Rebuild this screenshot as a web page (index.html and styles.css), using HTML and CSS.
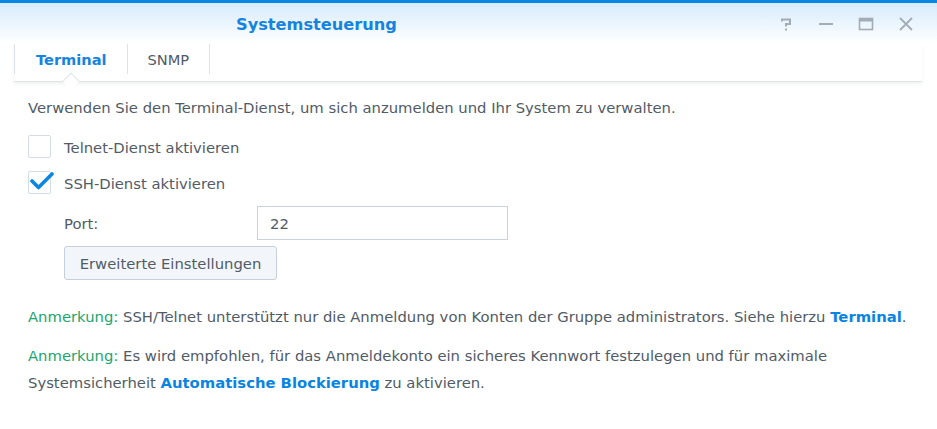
FILE: index.html
```html
<!DOCTYPE html>
<html lang="de">
<head>
    <meta charset="UTF-8">
    <title>Systemsteuerung</title>
    <link rel="stylesheet" href="styles.css">
</head>
<body>
    <div class="window">
        <div class="header">
            <div class="title">Systemsteuerung</div>
            <div class="controls">
                <svg class="ctl" width="16" height="16" viewBox="0 0 16 16"><path d="M4 5.5 V3.5 H12 V8 H8 V10.5" fill="none" stroke="#a3acb5" stroke-width="2"/><rect x="7" y="12.5" width="2" height="2" fill="#a3acb5"/></svg>
                <svg class="ctl" width="16" height="16" viewBox="0 0 16 16"><rect x="1" y="7" width="14" height="2" fill="#a3acb5"/></svg>
                <svg class="ctl" width="16" height="16" viewBox="0 0 16 16"><rect x="1.5" y="2.5" width="13" height="11" fill="none" stroke="#a3acb5" stroke-width="1.6"/><rect x="1.5" y="2.5" width="13" height="3" fill="#a3acb5"/></svg>
                <svg class="ctl" width="16" height="16" viewBox="0 0 16 16"><path d="M2 2 L14 14 M14 2 L2 14" stroke="#a3acb5" stroke-width="1.8"/></svg>
            </div>
        </div>

        <div class="tabs">
            <div class="tab active">Terminal</div>
            <div class="tab">SNMP</div>
        </div>

        <div class="content">
            <p class="intro">Verwenden Sie den Terminal-Dienst, um sich anzumelden und Ihr System zu verwalten.</p>

            <div class="check-row">
                <span class="box"></span>
                <span>Telnet-Dienst aktivieren</span>
            </div>
            <div class="check-row">
                <span class="box">
                    <svg class="tick" width="24" height="20" viewBox="0 0 24 20"><path d="M2 10 L8.5 16.5 L22 3" fill="none" stroke="#0b86e2" stroke-width="3.6" stroke-linecap="round" stroke-linejoin="round"/></svg>
                </span>
                <span>SSH-Dienst aktivieren</span>
            </div>

            <div class="sub">
                <div class="field">
                    <label for="port">Port:</label>
                    <input type="text" id="port" value="22">
                </div>
                <button type="button">Erweiterte Einstellungen</button>
            </div>

            <p class="note"><span class="green">Anmerkung:</span> SSH/Telnet unterstützt nur die Anmeldung von Konten der Gruppe administrators. Siehe hierzu <a href="#">Terminal</a>.</p>
            <p class="note">
                <span class="green">Anmerkung:</span> Es wird empfohlen, für das Anmeldekonto ein sicheres Kennwort festzulegen und für maximale<br>
                Systemsicherheit <a href="#">Automatische Blockierung</a> zu aktivieren.
            </p>
        </div>
    </div>
</body>
</html>
```

FILE: styles.css
```css
* {
    box-sizing: border-box;
}
body {
    margin: 0;
    background: #fff;
    font-family: "DejaVu Sans", Verdana, sans-serif;
    font-size: 14.8px;
    color: #515b66;
}
.header {
    height: 44px;
    border-top: 3px solid #0a86e3;
    background: linear-gradient(#d7ebfb, #ffffff);
    display: flex;
    align-items: center;
}
.title {
    margin-left: 236px;
    flex: 1;
    font-size: 16.2px;
    font-weight: bold;
    color: #1584e0;
    padding-top: 2px;
}
.controls {
    display: flex;
    align-items: center;
    gap: 24px;
    margin-right: 23px;
}
.ctl {
    display: block;
}
.tabs {
    position: relative;
    display: flex;
    margin: 0 15px 0 14px;
    height: 38px;
    border-bottom: 1px solid #dfe3e7;
    box-shadow: 0 2px 3px rgba(0, 0, 0, 0.06);
}
.tab {
    position: relative;
    height: 30px;
    line-height: 31px;
    padding: 0 20px;
    font-size: 14.6px;
    color: #515b66;
    border-right: 1px solid #dde3e8;
}
.tab:first-child {
    border-left: 1px solid #dde3e8;
    padding-left: 21px;
}
.tab.active {
    color: #1584e0;
    font-weight: bold;
}
.tab.active::after {
    content: "";
    position: absolute;
    left: 50%;
    top: 31px;
    width: 11px;
    height: 11px;
    margin-left: -6px;
    background: #fff;
    border-left: 1px solid #dfe3e7;
    border-top: 1px solid #dfe3e7;
    transform: rotate(45deg);
}
.content {
    padding: 0 28px;
}
.intro {
    margin: 16px 0 0;
    line-height: 20px;
}
.check-row {
    display: flex;
    align-items: center;
    gap: 13px;
    height: 22px;
    margin-top: 17px;
}
.check-row span:last-child {
    padding-top: 3px;
}
.check-row + .check-row {
    margin-top: 14px;
}
.box {
    position: relative;
    width: 23px;
    height: 23px;
    border: 1px solid #d4dde6;
    border-radius: 2px;
    background: #fff;
    flex: none;
}
.tick {
    position: absolute;
    left: 1px;
    top: -1px;
}
.sub {
    padding-left: 36px;
}
.field {
    display: flex;
    align-items: center;
    margin-top: 13px;
}
.field label {
    width: 193px;
}
.field input {
    width: 251px;
    height: 34px;
    border: 1px solid #c9d3dc;
    border-radius: 0;
    padding: 0 12px;
    font: inherit;
    color: #515b66;
    outline: none;
}
button {
    margin-top: 6px;
    height: 34px;
    width: 213px;
    border: 1px solid #c6d0da;
    border-radius: 3px;
    background: #f2f6fa;
    font: inherit;
    color: #515b66;
}
.note {
    margin: 23px 0 0;
    line-height: 27px;
}
.note + .note {
    margin-top: 12px;
}
.green {
    color: #1ca56e;
}
a {
    color: #0a84e3;
    font-weight: bold;
    text-decoration: none;
}
```
